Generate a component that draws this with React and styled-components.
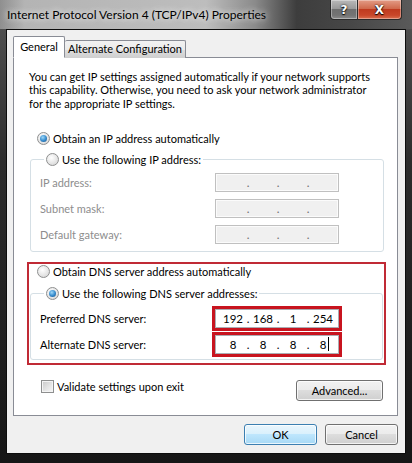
import styled, { createGlobalStyle } from 'styled-components';

const GlobalStyle = createGlobalStyle`
	html, body {
		margin: 0;
		padding: 0;
		background: #1c1c1c;
	}
`;

const Window = styled.div`
	width: 412px;
	height: 463px;
	box-sizing: border-box;
	display: flex;
	flex-direction: column;
	padding: 0 6px 9px 6px;
	background: linear-gradient(180deg, #555 0%, #2c2c2c 35%, #161616 100%);
	font-family: Lato, 'Segoe UI', sans-serif;
	font-size: 11px;
	color: #000;
	white-space: nowrap;
`;

const TitleBar = styled.div`
	height: 29px;
	flex: none;
	margin: 0 -6px;
	padding: 0 10px 0 7px;
	display: flex;
	justify-content: space-between;
	align-items: flex-start;
	background: linear-gradient(
		90deg,
		#8f8f8f 0%,
		#b4b4b4 6%,
		#bdbdbd 50%,
		#8a8a8a 62%,
		#3d3d3d 72%,
		#474747 85%,
		#5a5a5a 100%
	);
`;

const Title = styled.div`
	padding-top: 7px;
	line-height: 16px;
	font-size: 12px;
	text-shadow: 0 0 6px rgba(255, 255, 255, 0.8), 0 0 10px rgba(255, 255, 255, 0.6);
`;

const CaptionButtons = styled.div`
	display: flex;
`;

const CaptionButton = styled.div`
	height: 20px;
	box-sizing: border-box;
	display: flex;
	align-items: center;
	justify-content: center;
	border: 1px solid #2a2a2a;
	border-top: none;
	color: #fff;
	font-family: 'DejaVu Sans', sans-serif;
	font-weight: bold;
	font-size: 12px;
	text-shadow: 0 0 2px #000, 0 1px 1px #000;
	box-shadow: inset 0 0 0 1px rgba(255, 255, 255, 0.35);
	width: ${(p) => (p.$close ? '44px' : '28px')};
	border-radius: ${(p) => (p.$close ? '0 0 4px 0' : '0 0 0 4px')};
	border-left: ${(p) => (p.$close ? 'none' : '1px solid #2a2a2a')};
	background: ${(p) =>
		p.$close
			? 'linear-gradient(180deg, #e39c86 0%, #d06a4d 45%, #bf3b1f 50%, #c9472a 80%, #d9704f 100%)'
			: 'linear-gradient(180deg, #b9b9b9 0%, #9a9a9a 45%, #6f6f6f 50%, #747474 80%, #8c8c8c 100%)'};
`;

const Client = styled.div`
	flex: 1;
	display: flex;
	flex-direction: column;
	border: 1px solid #0d0d0d;
	background: #f0f0f0;
	padding: 6px 7px 0 6px;
`;

const Tabs = styled.div`
	display: flex;
	align-items: flex-end;
	height: 22px;
	margin-bottom: -1px;
	position: relative;
	z-index: 1;
`;

const Tab = styled.div`
	box-sizing: border-box;
	width: ${(p) => p.$width}px;
	height: ${(p) => (p.$active ? '22px' : '18px')};
	line-height: ${(p) => (p.$active ? '19px' : '16px')};
	text-align: center;
	border: 1px solid #898c95;
	border-bottom: ${(p) => (p.$active ? '1px solid #fff' : 'none')};
	border-left: ${(p) => (p.$active ? '1px solid #898c95' : 'none')};
	border-radius: 2px 2px 0 0;
	background: ${(p) =>
		p.$active ? '#fff' : 'linear-gradient(180deg, #f2f2f2 0%, #ebebeb 50%, #dddddd 51%, #cfcfcf 100%)'};
`;

const Panel = styled.div`
	height: 359px;
	box-sizing: border-box;
	background: #fff;
	border: 1px solid #898c95;
	padding: 12px 11px 0 13px;
`;

const Intro = styled.p`
	margin: 0 0 0 2px;
	line-height: 13.3px;
`;

const OptionRow = styled.div`
	display: flex;
	align-items: center;
	gap: 3px;
	height: 16px;
	margin-top: ${(p) => p.$top || 0}px;
	margin-left: ${(p) => p.$indent || 0}px;
`;

const Radio = styled.span`
	position: relative;
	width: 13px;
	height: 13px;
	box-sizing: border-box;
	border-radius: 50%;
	border: 1px solid #8e8f8f;
	background: radial-gradient(circle at 40% 35%, #ffffff 0%, #e6e6e6 55%, #cfcfcf 100%);
	flex: none;

	&::after {
		content: '';
		display: ${(p) => (p.$checked ? 'block' : 'none')};
		position: absolute;
		left: 2px;
		top: 2px;
		width: 7px;
		height: 7px;
		border-radius: 50%;
		background: radial-gradient(circle at 40% 35%, #9fd8f8 0%, #3a8fd0 50%, #134f86 100%);
	}
`;

const GroupBox = styled.fieldset`
	border: 1px solid #d5dfe5;
	border-radius: 3px;
	margin: ${(p) => p.$top}px ${(p) => p.$right}px 0 ${(p) => p.$left}px;
	padding: ${(p) => p.$padTop}px 0 ${(p) => p.$padBottom}px 9px;
	min-width: 0;
`;

const Legend = styled.legend`
	padding: 0 2px;
	margin-left: 4px;
	height: 16px;
	display: flex;
	align-items: center;
	gap: 3px;
`;

const FieldRow = styled.div`
	display: grid;
	grid-template-columns: 175px 124px;
	align-items: center;
	height: 19px;

	& + & {
		margin-top: 7px;
	}
`;

const FieldLabel = styled.span`
	color: ${(p) => (p.$disabled ? '#8d8d8d' : '#000')};
`;

const IpBox = styled.div`
	width: 124px;
	height: 19px;
	box-sizing: border-box;
	display: flex;
	align-items: center;
	padding-left: 6px;
	border: 1px solid ${(p) => (p.$disabled ? '#c0c0c0' : '#abadb3')};
	background: ${(p) => (p.$disabled ? '#f0f0f0' : '#fff')};
	box-shadow: ${(p) => (p.$highlight ? '0 0 0 3px #c8141f' : 'inset 0 0 0 1px #fbfbfb')};
	color: ${(p) => (p.$disabled ? '#6d6d6d' : '#000')};
	font-size: 11.5px;
`;

const Octet = styled.span`
	width: 22px;
	text-align: center;
`;

const Dot = styled.span`
	width: 8px;
	text-align: center;
`;

const Caret = styled.span`
	display: inline-block;
	width: 1px;
	height: 14px;
	background: #000;
	margin-left: -6px;
`;

const Highlight = styled.div`
	border: 2px solid #c02a35;
	margin-top: 10px;
	padding: 0 0 3px 0;
`;

const BottomRow = styled.div`
	display: flex;
	justify-content: space-between;
	align-items: flex-start;
	margin: 15px 3px 0 14px;
`;

const CheckLabel = styled.label`
	display: flex;
	align-items: center;
	gap: 3px;
	height: 13px;
`;

const CheckBox = styled.span`
	width: 13px;
	height: 13px;
	box-sizing: border-box;
	border: 1px solid #8e8f8f;
	background: linear-gradient(135deg, #c8c8c8 0%, #e4e4e4 55%, #f7f7f7 100%);
	box-shadow: inset 0 0 0 1px #f4f4f4;
`;

const Button = styled.button`
	width: ${(p) => p.$width}px;
	height: 21px;
	box-sizing: border-box;
	padding: 0;
	border-radius: 3px;
	font-family: inherit;
	font-size: 11px;
	color: #000;
	border: 1px solid ${(p) => (p.$primary ? '#3c7fb1' : '#707070')};
	box-shadow: inset 0 0 0 1px rgba(255, 255, 255, 0.75);
	background: ${(p) =>
		p.$primary
			? 'linear-gradient(180deg, #eaf6fd 0%, #d9f0fc 49%, #bee6fd 50%, #a7d9f5 100%)'
			: 'linear-gradient(180deg, #f2f2f2 0%, #ebebeb 49%, #dddddd 50%, #cfcfcf 100%)'};
`;

const Footer = styled.div`
	display: flex;
	justify-content: flex-end;
	gap: 8px;
	margin-top: 8px;
`;

const IpField = ({ values, disabled, highlight, caret }) => (
	<IpBox $disabled={disabled} $highlight={highlight}>
		{[0, 1, 2, 3].map((i) => (
			<span key={i} style={{ display: 'contents' }}>
				<Octet>{values ? values[i] : ''}</Octet>
				{i < 3 && <Dot>.</Dot>}
			</span>
		))}
		{caret && <Caret />}
	</IpBox>
);

const App = () => {
	return (
		<>
			<GlobalStyle />
			<Window>
				<TitleBar>
					<Title>Internet Protocol Version 4 (TCP/IPv4) Properties</Title>
					<CaptionButtons>
						<CaptionButton>?</CaptionButton>
						<CaptionButton $close>X</CaptionButton>
					</CaptionButtons>
				</TitleBar>
				<Client>
					<Tabs>
						<Tab $active $width={52}>
							General
						</Tab>
						<Tab $width={121}>Alternate Configuration</Tab>
					</Tabs>
					<Panel>
						<Intro>
							You can get IP settings assigned automatically if your network supports
							<br />
							this capability. Otherwise, you need to ask your network administrator
							<br />
							for the appropriate IP settings.
						</Intro>

						<OptionRow $top={21} $indent={10}>
							<Radio $checked />
							Obtain an IP address automatically
						</OptionRow>

						<GroupBox $top={5} $left={3} $right={2} $padTop={5} $padBottom={7}>
							<Legend>
								<Radio />
								Use the following IP address:
							</Legend>
							<FieldRow>
								<FieldLabel $disabled>IP address:</FieldLabel>
								<IpField disabled />
							</FieldRow>
							<FieldRow>
								<FieldLabel $disabled>Subnet mask:</FieldLabel>
								<IpField disabled />
							</FieldRow>
							<FieldRow>
								<FieldLabel $disabled>Default gateway:</FieldLabel>
								<IpField disabled />
							</FieldRow>
						</GroupBox>

						<Highlight>
							<OptionRow $indent={8}>
								<Radio />
								Obtain DNS server address automatically
							</OptionRow>
							<GroupBox $top={6} $left={1} $right={1} $padTop={7} $padBottom={5}>
								<Legend>
									<Radio $checked />
									Use the following DNS server addresses:
								</Legend>
								<FieldRow>
									<FieldLabel>Preferred DNS server:</FieldLabel>
									<IpField highlight values={['192', '168', '1', '254']} />
								</FieldRow>
								<FieldRow>
									<FieldLabel>Alternate DNS server:</FieldLabel>
									<IpField highlight caret values={['8', '8', '8', '8']} />
								</FieldRow>
							</GroupBox>
						</Highlight>

						<BottomRow>
							<CheckLabel>
								<CheckBox />
								Validate settings upon exit
							</CheckLabel>
							<Button $width={87}>Advanced...</Button>
						</BottomRow>
					</Panel>
					<Footer>
						<Button $primary $width={73}>
							OK
						</Button>
						<Button $width={73}>Cancel</Button>
					</Footer>
				</Client>
			</Window>
		</>
	);
};

export default App;
